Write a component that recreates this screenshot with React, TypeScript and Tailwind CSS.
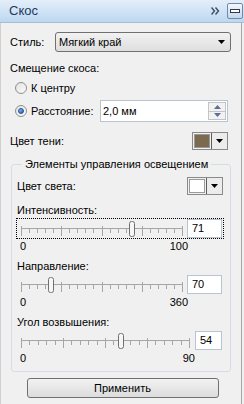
const font = { fontFamily: '"Liberation Sans", Arial, sans-serif' };

function Arrow({ className = '' }: { className?: string }) {
  return (
    <svg width="7" height="4" viewBox="0 0 7 4" className={className}>
      <path d="M0 0h7L3.5 4z" fill="#000" />
    </svg>
  );
}

function Radio({ checked, label }: { checked?: boolean; label: string }) {
  return (
    <div className="flex items-center h-4 pl-[14px]">
      <span className="w-[12px] h-[12px] rounded-full border border-[#8e8f8f] bg-gradient-to-br from-[#e2e2e2] to-[#fbfbfb] flex items-center justify-center">
        {checked && (
          <span className="w-[6px] h-[6px] rounded-full bg-gradient-to-br from-[#8ec6f5] to-[#1b5fb5] border border-[#1d4f8f]" />
        )}
      </span>
      <span className="ml-[4px]">{label}</span>
    </div>
  );
}

function ColorButton({ color }: { color: string }) {
  return (
    <div className="flex w-[36px] h-[18px] border border-[#8a8a8a] bg-[#f0f0f0]">
      <div className="w-[18px] h-full p-[1px]">
        <div className="w-full h-full border border-[#9a9a9a]" style={{ background: color }} />
      </div>
      <div className="flex-1 border-l border-[#5e5e5e] bg-[#ececec] flex items-center justify-center">
        <Arrow />
      </div>
    </div>
  );
}

function Track({ length, thumb }: { length: number; thumb: number }) {
  const x0 = 4;
  const ticks = Array.from({ length: 21 }, (_, i) => i);
  return (
    <svg width={length + 8} height={19} className="block">
      <line x1={x0} y1={8.5} x2={x0 + length} y2={8.5} stroke="#a6a6a6" />
      {ticks.map((i) => {
        const x = Math.round(x0 + (i * length) / 20) + 0.5;
        const major = i % 5 === 0;
        return (
          <line key={i} x1={x} x2={x} y1={major ? 6 : 8} y2={major ? 16 : 13} stroke="#a6a6a6" />
        );
      })}
      <rect x={thumb - 2.5} y={1.5} width={5} height={15} rx={2} fill="#f6f6f6" stroke="#707070" />
    </svg>
  );
}

function SliderBlock({
  label,
  value,
  max,
  length,
  thumb,
  inputW,
  focused,
}: {
  label: string;
  value: string;
  max: string;
  length: number;
  thumb: number;
  inputW: string;
  focused?: boolean;
}) {
  return (
    <div>
      <div className="h-4 leading-4">{label}</div>
      <div
        className={`flex items-start h-[21px] -ml-[1px] mr-[-1px] border ${
          focused ? 'border-dotted border-black' : 'border-transparent'
        }`}
      >
        <div className="pt-[1px]">
          <Track length={length} thumb={thumb} />
        </div>
        <div
          className={`ml-auto mr-[1px] ${inputW} h-[19px] bg-white border border-[#b8c4d2] pl-[4px] leading-[17px]`}
        >
          {value}
        </div>
      </div>
      <div className="flex h-[14px] leading-[14px]" style={{ width: length + 10 }}>
        <span className="ml-[3px]">0</span>
        <span className="ml-auto">{max}</span>
      </div>
    </div>
  );
}

export default function App() {
  return (
    <div
      className="w-[244px] h-[404px] bg-[#f0f0f0] text-[11px] text-black overflow-hidden flex flex-col"
      style={font}
    >
      {/* Title */}
      <div className="h-[23px] shrink-0 flex items-center bg-gradient-to-b from-[#e4eefa] to-[#bcd8f2] border-b border-[#a6bdd6]">
        <span className="ml-[9px] text-[13px] text-[#1e395b]">Скос</span>
        <svg width="9" height="8" viewBox="0 0 9 8" className="ml-auto">
          <path d="M0.5 0.5l3 3.5-3 3.5M4.5 0.5l3 3.5-3 3.5" fill="none" stroke="#3d4f66" strokeWidth="1.4" />
        </svg>
        <div className="ml-[7px] mr-[1px] w-[16px] h-[16px] border border-[#7388a6] rounded-[2px] bg-gradient-to-b from-[#f4f8fc] to-[#c6d8ec] flex items-center justify-center">
          <span className="w-[10px] h-[4px] border border-[#2c3a4e] bg-white" />
        </div>
      </div>

      <div className="flex flex-1">
        <div className="w-[242px] border-l border-[#d0d0d0] border-r border-r-[#a6a6a6] flex flex-col">
          {/* Style */}
          <div className="flex items-center h-[20px] mt-[9px]">
            <span className="ml-[9px] w-[45px]">Стиль:</span>
            <div className="w-[176px] h-[20px] border border-[#707070] rounded-[3px] bg-gradient-to-b from-[#f2f2f2] to-[#dedede] flex items-center pl-[3px]">
              <span>Мягкий край</span>
              <Arrow className="ml-auto mr-[5px]" />
            </div>
          </div>

          <div className="ml-[9px] mt-[8px] h-4 leading-4">Смещение скоса:</div>
          <div className="mt-[4px]">
            <Radio label="К центру" />
          </div>
          <div className="flex items-center h-[22px] mt-[4px]">
            <Radio checked label="Расстояние:" />
            <div className="ml-auto mr-[13px] w-[128px] h-[22px] bg-white border border-[#b8c4d2] flex items-center">
              <span className="pl-[2px]">2,0 мм</span>
              <div className="ml-auto mr-[1px] w-[18px] h-[18px] flex flex-col">
                <div className="flex-1 border border-[#c4c4c4] bg-[#f2f2f2] flex items-center justify-center">
                  <svg width="7" height="4"><path d="M0 4h7L3.5 0z" fill="#5a6f9a" /></svg>
                </div>
                <div className="flex-1 border border-[#c4c4c4] border-t-0 bg-[#f2f2f2] flex items-center justify-center">
                  <svg width="7" height="4"><path d="M0 0h7L3.5 4z" fill="#5a6f9a" /></svg>
                </div>
              </div>
            </div>
          </div>

          <div className="flex items-center h-[18px] mt-[10px]">
            <span className="ml-[9px]">Цвет тени:</span>
            <div className="ml-auto mr-[13px]">
              <ColorButton color="#7b6a50" />
            </div>
          </div>

          {/* Lighting group */}
          <fieldset className="mx-[10px] mt-[6px] border border-[#d5dce4] rounded-[3px] pl-[5px] pr-[7px] pb-[6px]">
            <legend className="ml-[5px] px-[3px] h-4 leading-4 whitespace-nowrap">Элементы управления освещением</legend>
            <div className="flex items-center h-[18px] mt-[5px]">
              <span>Цвет света:</span>
              <div className="ml-auto">
                <ColorButton color="#ffffff" />
              </div>
            </div>
            <div className="mt-[7px]">
              <SliderBlock label="Интенсивность:" value="71" max="100" length={161} thumb={115} inputW="w-[35px]" focused />
            </div>
            <div className="mt-[5px]">
              <SliderBlock label="Направление:" value="70" max="360" length={161} thumb={34} inputW="w-[35px]" />
            </div>
            <div className="mt-[5px]">
              <SliderBlock label="Угол возвышения:" value="54" max="90" length={168} thumb={104} inputW="w-[27px]" />
            </div>
          </fieldset>

          <div className="flex justify-center mt-[6px]">
            <button className="w-[192px] h-[20px] ml-[3px] border border-[#707070] rounded-[3px] bg-gradient-to-b from-[#f2f2f2] to-[#dcdcdc]">
              Применить
            </button>
          </div>
        </div>
      </div>
    </div>
  );
}
